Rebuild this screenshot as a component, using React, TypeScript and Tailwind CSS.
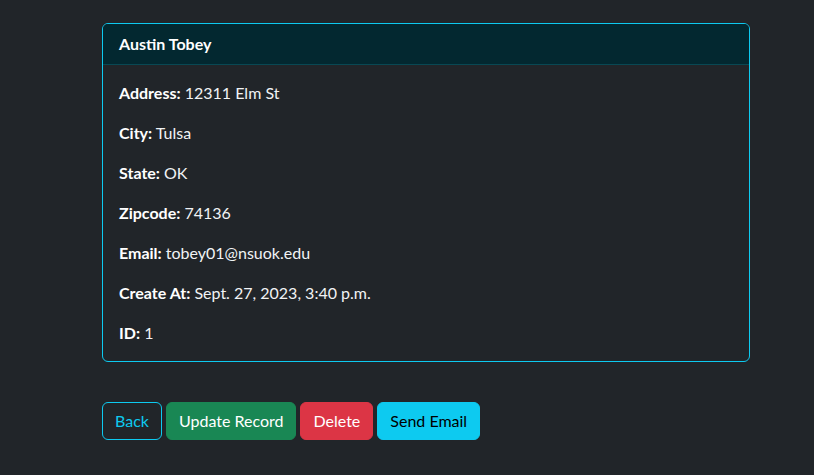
const fields: [string, string][] = [
  ["Address:", "12311 Elm St"],
  ["City:", "Tulsa"],
  ["State:", "OK"],
  ["Zipcode:", "74136"],
  ["Email:", "tobey01@nsuok.edu"],
  ["Create At:", "Sept. 27, 2023, 3:40 p.m."],
  ["ID:", "1"],
];

export default function App() {
  return (
    <div className="min-h-[475px] bg-[#212529] text-[#f1f3f5] text-base font-['Lato',sans-serif] pl-[102px] pt-[23px]">
      <div className="w-[648px] border border-[#0dcaf0] rounded-md overflow-hidden">
        <div className="bg-[#032830] px-4 py-2 leading-6 font-bold text-white border-b border-[#0b5563]/70">
          Austin Tobey
        </div>
        <div className="p-4">
          {fields.map(([label, value], i) => (
            <p key={label} className={`leading-6 ${i < fields.length - 1 ? "mb-4" : ""}`}>
              <strong className="font-bold text-white">{label}</strong> {value}
            </p>
          ))}
        </div>
      </div>
      <div className="flex gap-1 mt-10">
        <button className="h-[38px] px-3 rounded-md border border-[#0dcaf0] text-[#0dcaf0]">Back</button>
        <button className="h-[38px] px-3 rounded-md border border-[#198754] bg-[#198754] text-white">Update Record</button>
        <button className="h-[38px] px-3 rounded-md border border-[#dc3545] bg-[#dc3545] text-white">Delete</button>
        <button className="h-[38px] px-3 rounded-md border border-[#0dcaf0] bg-[#0dcaf0] text-black">Send Email</button>
      </div>
    </div>
  );
}
